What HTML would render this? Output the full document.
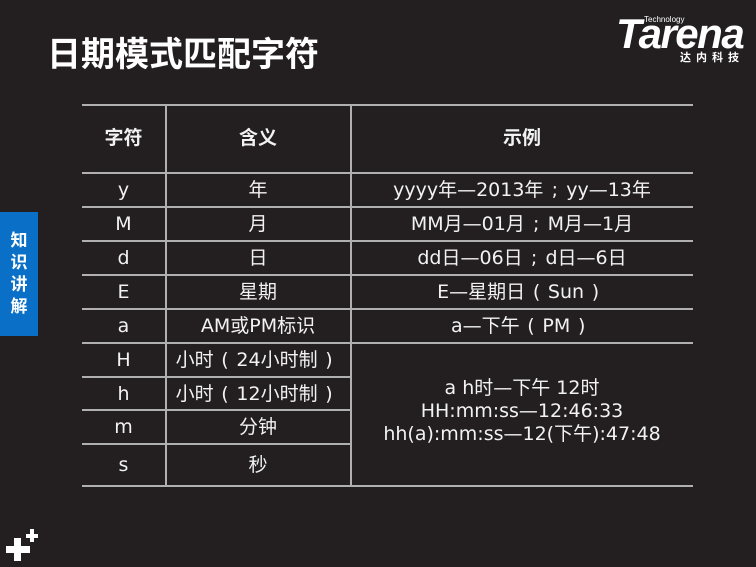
<!DOCTYPE html>
<html><head><meta charset="utf-8">
<style>
*{margin:0;padding:0;box-sizing:border-box}
body{width:756px;height:567px;background:#231f20;position:relative;overflow:hidden;font-family:"Liberation Sans","Noto Sans CJK SC",sans-serif;color:#fff}
.t{position:absolute;left:47px;top:33px;font-size:34px;font-weight:bold;line-height:44px}
.logo{position:absolute;left:616px;top:12px;font-size:42px;font-weight:bold;font-style:italic;letter-spacing:-1.5px;line-height:44px}
.tech{position:absolute;left:644px;top:16px;font-size:8px;line-height:8px}
.cn{position:absolute;left:680px;top:52px;font-size:11px;font-weight:bold;letter-spacing:5px;line-height:12px}
.side{position:absolute;left:0;top:212px;width:38px;height:124px;background:#0a6fc6;font-weight:bold;font-size:17px;line-height:22px;text-align:center;padding-top:18px}
.h{position:absolute;height:1.5px;background:#b0b0b0}
.v{position:absolute;width:1.5px;background:#b0b0b0}
.c{position:absolute;text-align:center;font-family:"DejaVu Sans","Noto Sans CJK SC",sans-serif;font-size:19px;line-height:24px;color:#f2f2f2;white-space:nowrap}
.b{font-weight:bold;font-family:"Liberation Sans","Noto Sans CJK SC",sans-serif}
.p{position:absolute;background:#fff}
.w{display:inline-block;width:1.2em;text-align:center}
</style></head><body>
<div class="t">日期模式匹配字符</div>
<div class="tech">Technology</div>
<div class="logo">Tarena</div>
<div class="cn">达内科技</div>
<div class="side">知<br>识<br>讲<br>解</div>

<div class="h" style="left:82px;width:611px;top:104px"></div>
<div class="h" style="left:82px;width:611px;top:172px"></div>
<div class="h" style="left:82px;width:611px;top:206px"></div>
<div class="h" style="left:82px;width:611px;top:240px"></div>
<div class="h" style="left:82px;width:611px;top:274px"></div>
<div class="h" style="left:82px;width:611px;top:308px"></div>
<div class="h" style="left:82px;width:611px;top:342px"></div>
<div class="h" style="left:82px;width:268px;top:376px"></div>
<div class="h" style="left:82px;width:268px;top:409px"></div>
<div class="h" style="left:82px;width:268px;top:443px"></div>
<div class="h" style="left:82px;width:611px;top:485px"></div>
<div class="v" style="left:165px;top:104px;height:383px"></div>
<div class="v" style="left:350px;top:104px;height:383px"></div>

<div class="c b" style="left:82px;width:83px;top:127px">字符</div>
<div class="c b" style="left:166px;width:184px;top:127px">含义</div>
<div class="c b" style="left:351px;width:342px;top:127px">示例</div>

<div class="c" style="left:82px;width:83px;top:178px">y</div>
<div class="c" style="left:166px;width:184px;top:178px">年</div>
<div class="c" style="left:351px;width:342px;top:178px">yyyy年—2013年<span class="w">;</span>yy—13年</div>
<div class="c" style="left:82px;width:83px;top:212px">M</div>
<div class="c" style="left:166px;width:184px;top:212px">月</div>
<div class="c" style="left:351px;width:342px;top:212px">MM月—01月<span class="w">;</span>M月—1月</div>
<div class="c" style="left:82px;width:83px;top:246px">d</div>
<div class="c" style="left:166px;width:184px;top:246px">日</div>
<div class="c" style="left:351px;width:342px;top:246px">dd日—06日<span class="w">;</span>d日—6日</div>
<div class="c" style="left:82px;width:83px;top:280px">E</div>
<div class="c" style="left:166px;width:184px;top:280px">星期</div>
<div class="c" style="left:351px;width:342px;top:280px">E—星期日<span class="w">(</span>Sun<span class="w">)</span></div>
<div class="c" style="left:82px;width:83px;top:314px">a</div>
<div class="c" style="left:166px;width:184px;top:314px">AM或PM标识</div>
<div class="c" style="left:351px;width:342px;top:314px">a—下午<span class="w">(</span>PM<span class="w">)</span></div>
<div class="c" style="left:82px;width:83px;top:348px">H</div>
<div class="c" style="left:166px;width:184px;top:348px">小时<span class="w">(</span>24小时制<span class="w">)</span></div>
<div class="c" style="left:82px;width:83px;top:382px">h</div>
<div class="c" style="left:166px;width:184px;top:382px">小时<span class="w">(</span>12小时制<span class="w">)</span></div>
<div class="c" style="left:82px;width:83px;top:415px">m</div>
<div class="c" style="left:166px;width:184px;top:415px">分钟</div>
<div class="c" style="left:82px;width:83px;top:453px">s</div>
<div class="c" style="left:166px;width:184px;top:453px">秒</div>
<div class="c" style="left:351px;width:342px;top:377px;line-height:23px">a h时—下午 12时<br>HH:mm:ss—12:46:33<br>hh(a):mm:ss—12(下午):47:48</div>

<div class="p" style="left:6px;top:546px;width:24px;height:7px"></div>
<div class="p" style="left:14px;top:538px;width:7px;height:23px"></div>
<div class="p" style="left:26px;top:534px;width:12px;height:4px"></div>
<div class="p" style="left:30px;top:529px;width:4px;height:13px"></div>
</body></html>
